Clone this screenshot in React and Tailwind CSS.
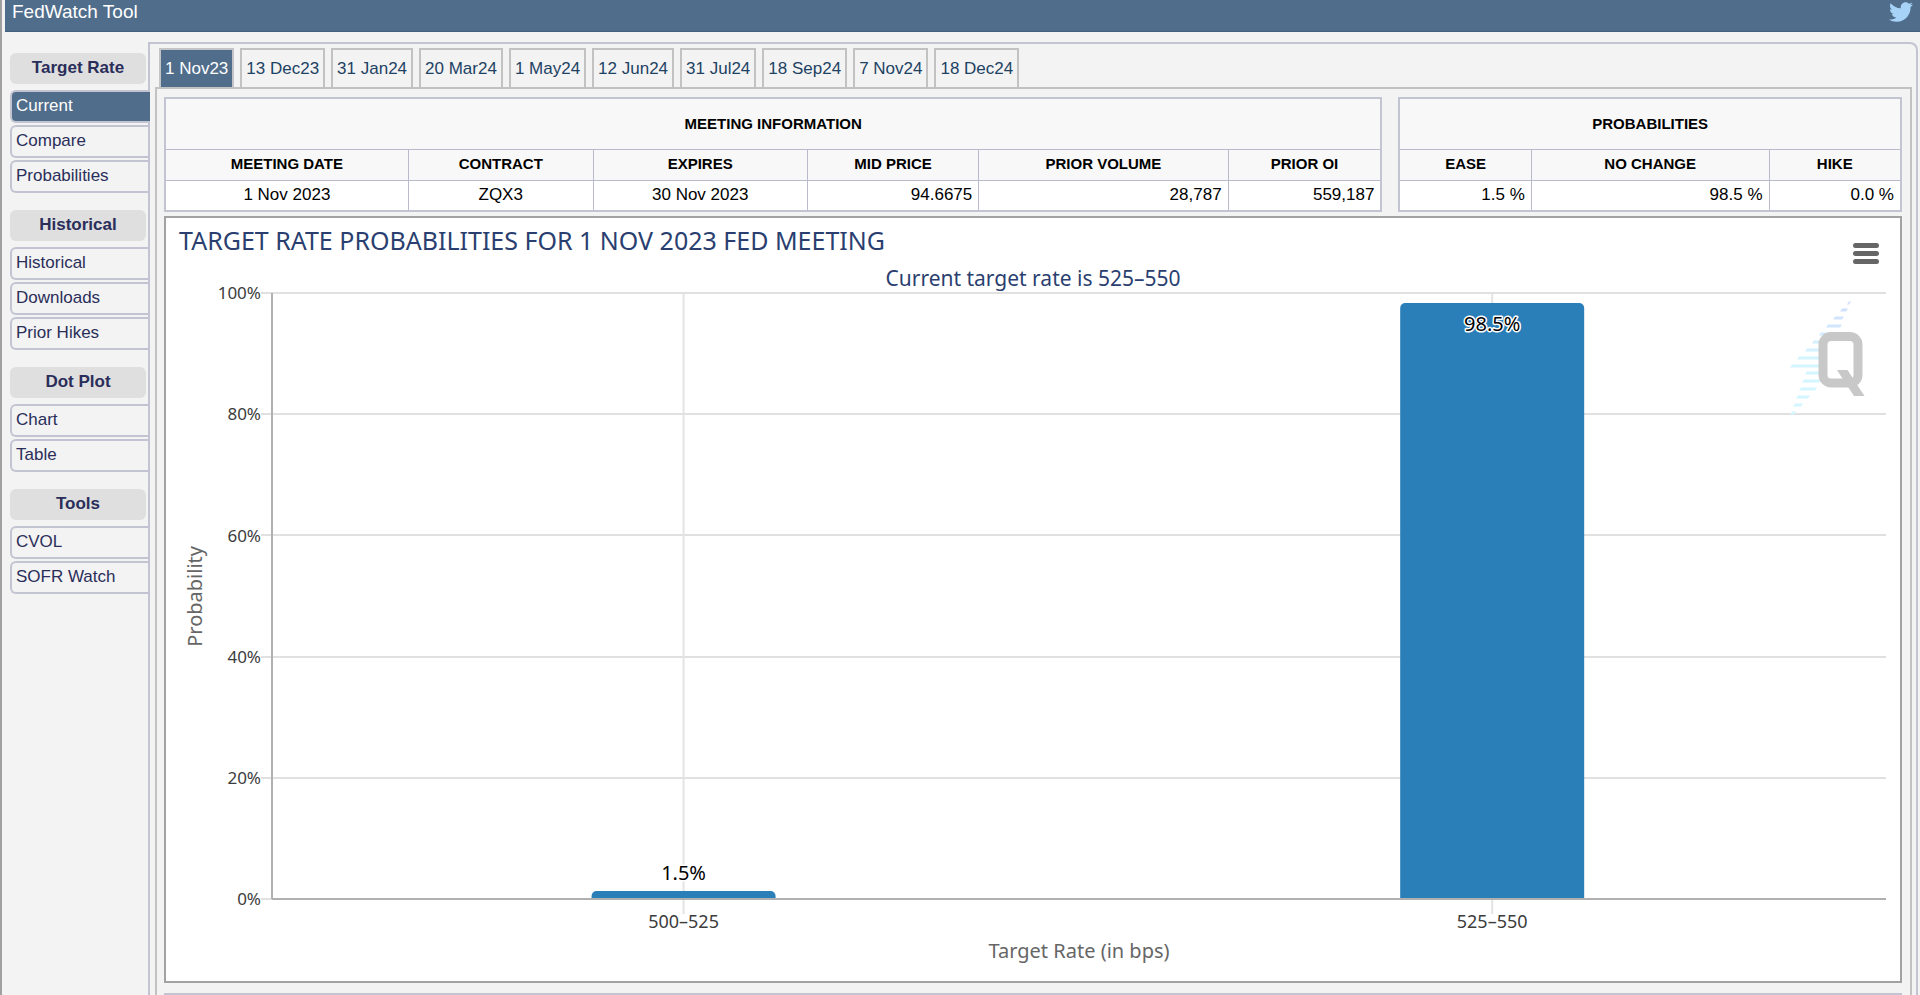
import { FaTwitter } from "react-icons/fa";

const menu = [
  { title: "Target Rate", items: ["Current", "Compare", "Probabilities"] },
  { title: "Historical", items: ["Historical", "Downloads", "Prior Hikes"] },
  { title: "Dot Plot", items: ["Chart", "Table"] },
  { title: "Tools", items: ["CVOL", "SOFR Watch"] },
];

const meetings = [
  "1 Nov23",
  "13 Dec23",
  "31 Jan24",
  "20 Mar24",
  "1 May24",
  "12 Jun24",
  "31 Jul24",
  "18 Sep24",
  "7 Nov24",
  "18 Dec24",
];

const meetingInfo = [
  { name: "MEETING DATE", value: "1 Nov 2023", width: "w-[20%]" },
  { name: "CONTRACT", value: "ZQX3", width: "w-[15.2%]" },
  { name: "EXPIRES", value: "30 Nov 2023", width: "w-[17.6%]" },
  { name: "MID PRICE", value: "94.6675", width: "w-[14.1%]", numeric: true },
  { name: "PRIOR VOLUME", value: "28,787", width: "w-[20.5%]", numeric: true },
  { name: "PRIOR OI", value: "559,187", width: "w-[12.6%]", numeric: true },
];

const probabilities = [
  { name: "EASE", value: "1.5 %", width: "w-[26.3%]", numeric: true },
  { name: "NO CHANGE", value: "98.5 %", width: "w-[47.4%]", numeric: true },
  { name: "HIKE", value: "0.0 %", width: "w-[26.3%]", numeric: true },
];

const ticks = [100, 80, 60, 40, 20, 0];

const PLOT_HEIGHT = 606;
const BAR_WIDTH = 11.4;

const bars = [
  { range: "500–525", value: 1.5, label: "1.5%", center: 25.5, labelY: 587 },
  { range: "525–550", value: 98.5, label: "98.5%", center: 75.6, labelY: 38 },
];

// [x1, x2, y] of each slanted stripe behind the Q
const stripes = [
  [78, 80, 12],
  [71, 77, 19],
  [64, 73, 27],
  [57, 71, 35],
  [50, 62, 43],
  [43, 50, 51],
  [36, 50, 59],
  [28, 50, 67],
  [21, 50, 75],
  [36, 50, 82],
  [33, 50, 90],
  [30, 46, 98],
  [27, 39, 106],
  [24, 32, 114],
  [21, 25, 122],
];

function Sidebar() {
  return (
    <nav className="w-[146px] shrink-0 pl-2 pt-[21px] text-[17px] text-[#2a2e5a]">
      {menu.map((group) => (
        <div key={group.title} className="mb-[17px]">
          <h2 className="mr-0.5 mb-1.5 h-[31px] rounded-md bg-[#dfdfdf] text-center font-bold leading-[30px]">
            {group.title}
          </h2>
          <ul className="space-y-0.5">
            {group.items.map((item) => (
              <li key={item}>
                <a
                  href="#"
                  className={`block h-[33px] rounded-l-md border-2 border-r-0 border-[#c3c4d2] pl-1 leading-[28px] ${
                    item === "Current" ? "relative -mr-0.5 bg-[#506d8b] text-white" : ""
                  }`}
                >
                  {item}
                </a>
              </li>
            ))}
          </ul>
        </div>
      ))}
    </nav>
  );
}

function InfoTable({ title, columns }) {
  return (
    <table className="w-full table-fixed border-collapse border-2 border-[#c3c4d2] bg-white text-black">
      <colgroup>
        {columns.map((col) => (
          <col key={col.name} className={col.width} />
        ))}
      </colgroup>
      <thead className="bg-[#f8f8f8] text-[15px]">
        <tr className="h-[51px]">
          <th colSpan={columns.length} className="border border-[#b9bacb] p-0 font-bold">
            {title}
          </th>
        </tr>
        <tr className="h-[31px]">
          {columns.map((col) => (
            <th key={col.name} className="border border-[#b9bacb] p-0 font-bold">
              {col.name}
            </th>
          ))}
        </tr>
      </thead>
      <tbody className="text-[17px]">
        <tr className="h-[31px]">
          {columns.map((col) => (
            <td
              key={col.name}
              className={`border border-[#b9bacb] px-1.5 py-0 leading-[26px] ${col.numeric ? "text-right" : "text-center"}`}
            >
              {col.value}
            </td>
          ))}
        </tr>
      </tbody>
    </table>
  );
}

function QLogo() {
  return (
    <svg
      viewBox="20 10 76 114"
      className="absolute right-5 top-2 h-[114px] w-[76px]"
      aria-hidden="true"
    >
      <defs>
        <linearGradient id="stripe" gradientUnits="userSpaceOnUse" x1="0" y1="10" x2="0" y2="70">
          <stop offset="0" stopColor="#cfdcff" />
          <stop offset="1" stopColor="#d4f6ff" />
        </linearGradient>
      </defs>
      {stripes.map(([x1, x2, y]) => (
        <polygon
          key={y}
          points={`${x1 + 1},${y - 1.4} ${x2 + 1},${y - 1.4} ${x2 - 1},${y + 1.4} ${x1 - 1},${y + 1.4}`}
          fill="url(#stripe)"
        />
      ))}
      <rect x="53" y="45.5" width="35" height="46.5" rx="8" fill="#fff" stroke="#c8c8c8" strokeWidth="9" />
      <polygon points="67,79 77.5,79 94.5,105 84,105" fill="#c8c8c8" />
    </svg>
  );
}

function Chart() {
  return (
    <section className="relative mt-1 border-2 border-[#a2a2a2] bg-white pt-[5px] pb-4 font-['Noto_Sans',sans-serif]">
      <h1 className="pl-[13px] text-[25px] leading-[34px] text-[#2a3f70]">
        TARGET RATE PROBABILITIES FOR 1 NOV 2023 FED MEETING
      </h1>
      <p className="mt-[7px] text-center text-[21px] leading-[29px] text-[#2a3f70]">
        Current target rate is 525–550
      </p>
      <button type="button" aria-label="Chart menu" className="absolute right-[21px] top-[25px]">
        <svg width="26" height="21" className="block">
          <path d="M2.5 2.5h21M2.5 10.5h21M2.5 18.5h21" stroke="#666" strokeWidth="5" strokeLinecap="round" />
        </svg>
      </button>

      <div className="flex items-start pr-3.5">
        <div className="ml-4 flex h-[606px] w-[26px] items-center justify-center">
          <span className="rotate-180 text-[20px] leading-[26px] text-[#666] [writing-mode:vertical-rl]">
            Probability
          </span>
        </div>
        <div className="mr-[11px] flex h-[606px] w-[53px] flex-col justify-between text-[17px] text-[#3c3c3c]">
          {ticks.map((tick) => (
            <div key={tick} className="flex h-0 items-center justify-end">
              {tick}%
            </div>
          ))}
        </div>

        <div className="relative flex-1">
          <svg className="block h-[640px] w-full overflow-visible">
            {ticks.map((tick) => {
              const y = Math.round(PLOT_HEIGHT * (1 - tick / 100));
              return (
                <line key={tick} x1="-11" x2="100%" y1={y} y2={y} stroke="#e0e0e0" strokeWidth="2" />
              );
            })}
            {bars.map((bar) => (
              <line
                key={bar.range}
                x1={`${bar.center}%`}
                x2={`${bar.center}%`}
                y1="0"
                y2={PLOT_HEIGHT + 15}
                stroke="#e3e3e3"
                strokeWidth="2"
              />
            ))}
            {/* the inner svg cuts the bars off at the axis, so only the top corners are round */}
            <svg width="100%" height={PLOT_HEIGHT}>
              {bars.map((bar) => {
                const height = (PLOT_HEIGHT * bar.value) / 100;
                return (
                  <rect
                    key={bar.range}
                    x={`${bar.center - BAR_WIDTH / 2}%`}
                    y={Math.round(PLOT_HEIGHT - height) + 1}
                    width={`${BAR_WIDTH}%`}
                    height={height + 10}
                    rx="5"
                    fill="#2a7fb9"
                  />
                );
              })}
            </svg>
            <line x1="0" x2="0" y1="0" y2={PLOT_HEIGHT} stroke="#b0b0b0" strokeWidth="2" />
            <line x1="0" x2="100%" y1={PLOT_HEIGHT} y2={PLOT_HEIGHT} stroke="#b0b0b0" strokeWidth="2" />
            {bars.map((bar) => (
              <g key={bar.range} textAnchor="middle">
                <text
                  x={`${bar.center}%`}
                  y={bar.labelY}
                  className="fill-black stroke-white text-[20px]"
                  strokeWidth="3"
                  strokeLinejoin="round"
                  paintOrder="stroke"
                >
                  {bar.label}
                </text>
                <text x={`${bar.center}%`} y="635" className="fill-[#3c3c3c] text-[18px]">
                  {bar.range}
                </text>
              </g>
            ))}
          </svg>
          <QLogo />
          <p className="mt-1 text-center text-[20px] leading-[28px] text-[#666]">
            Target Rate (in bps)
          </p>
        </div>
      </div>
    </section>
  );
}

export default function App() {
  return (
    <div className="flex h-screen flex-col overflow-hidden border-l-2 border-[#a0a0a0] bg-[#f3f3f3] font-['Liberation_Sans',Arial,sans-serif]">
      <header className="ml-[3px] flex h-8 shrink-0 items-start justify-between border-b border-[#43607e] bg-[#506d8b] pl-[7px] pr-[7px]">
        <span className="text-[19px] leading-[24px] text-white">FedWatch Tool</span>
        <a href="#" aria-label="Twitter">
          <FaTwitter size={24} className="text-[#a6d3f7]" />
        </a>
      </header>

      <div className="flex min-h-0 flex-1">
        <Sidebar />

        <main className="mt-2.5 mr-0.5 flex min-w-0 flex-1 flex-col rounded-tr-lg border-2 border-b-0 border-[#c3c4d2] pt-1 pl-[5px] pr-1">
          <div className="flex gap-1.5 pl-1 text-[17px]">
            {meetings.map((meeting, i) => (
              <button
                key={meeting}
                type="button"
                className={`h-[39px] border-2 border-b-0 px-1 leading-[35px] ${
                  i === 0 ? "border-[#c3c4c8] bg-[#506d8b] text-white" : "border-[#c2c2c2] text-[#1d4263]"
                }`}
              >
                {meeting}
              </button>
            ))}
          </div>

          <div className="flex-1 border-2 border-b-0 border-[#c2c2c2] pt-2 pl-[7px] pr-2">
            <div className="grid grid-cols-[1217fr_503fr] gap-4">
              <InfoTable title="MEETING INFORMATION" columns={meetingInfo} />
              <InfoTable title="PROBABILITIES" columns={probabilities} />
            </div>
            <Chart />
            <div className="mt-2.5 grid h-20 grid-cols-[543fr_1194fr] border-2 border-[#c3c4d2] bg-[#f8f8f8]">
              <div className="border-r-2 border-[#c3c4d2]" />
              <div />
            </div>
          </div>
        </main>
      </div>
    </div>
  );
}
